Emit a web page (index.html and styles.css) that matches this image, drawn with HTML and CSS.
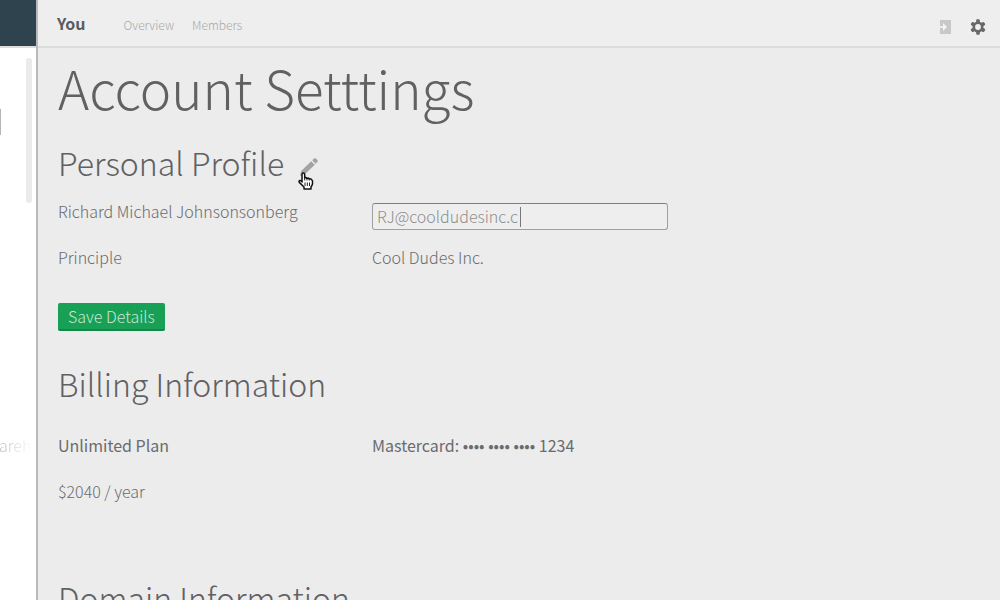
FILE: index.html
```html
<!DOCTYPE html>
<html lang="en">
<head>
<meta charset="utf-8">
<meta name="viewport" content="width=device-width, initial-scale=1">
<title>Account Settings</title>
<link rel="stylesheet" href="styles.css">
</head>
<body>
<div class="app">
  <aside class="sidebar">
    <div class="sidebar-head"></div>
    <div class="sidebar-body">
      <span class="marker"></span>
      <span class="scroll-thumb"></span>
      <span class="sidebar-label">areh</span>
    </div>
  </aside>
  <div class="panel">
    <header class="topbar">
      <strong class="brand">You</strong>
      <nav class="tabs">
        <a href="#overview">Overview</a>
        <a href="#members">Members</a>
      </nav>
      <div class="tools">
        <button class="tool" type="button" aria-label="Sign out">
          <svg width="11" height="14" viewBox="0 0 11 14"><path fill="#c8c8c8" d="M0 0h11v14H0z"/><path fill="#f6f6f6" d="M0 6.200h3V3l4 4-4 4V7.800H0z"/></svg>
        </button>
        <button class="tool" type="button" aria-label="Settings">
          <svg width="16" height="16" viewBox="0 0 16 16"><g fill="#66686a"><circle cx="8" cy="8" r="5.500"/><rect x="6.200" y="0.300" width="3.600" height="15.400" rx="1"/><rect x="6.200" y="0.300" width="3.600" height="15.400" rx="1" transform="rotate(60 8 8)"/><rect x="6.200" y="0.300" width="3.600" height="15.400" rx="1" transform="rotate(120 8 8)"/></g><circle cx="8" cy="8" r="2.900" fill="#efefef"/></svg>
        </button>
      </div>
    </header>
    <main class="content">
      <h1>Account Setttings</h1>

      <form class="section">
        <div class="section-head">
          <h2>Personal Profile</h2>
          <button class="edit" type="button" aria-label="Edit profile">
            <svg class="pencil" width="18" height="18" viewBox="0 0 18 18"><g fill="#a3a3a3"><path d="M11.2 3.2l3.6 3.6L4.6 16.4 0 18l1.2-5z"/><path d="M12.2 2.3l1.7-1.7q1-.9 2 0l1.4 1.4q.9 1 0 2l-1.700 1.700z"/></g></svg>
            <svg class="pointer" width="16" height="18" viewBox="0 0 16 18"><path d="M4 10V2.600Q4 1 5.300 1t1.400 1.600V6Q7.600 5 8.800 6.400 10.200 5.600 11.200 7 13 6.300 14 8.200L14.500 9v2.700Q14.300 13.500 13 14.800V17H6v-2L1.300 10.400Q.6 9 1.800 8.500T4 10z" fill="#fff" stroke="#111" stroke-width="1.500" stroke-linejoin="round"/><path d="M7 10.500v3.500M9.300 10.500v3.500M11.500 10.500v3.500M6.700 6v2.500M9 6.500v2M11.300 7v1.500" stroke="#222" fill="none"/></svg>
          </button>
        </div>
        <div class="details">
          <p>Richard Michael Johnsonsonberg</p>
          <div class="field">
            <input type="text" aria-label="Email" value="RJ@cooldudesinc.c">
            <span class="caret"></span>
          </div>
          <p>Principle</p>
          <p>Cool Dudes Inc.</p>
        </div>
        <button class="save" type="button">Save Details</button>
      </form>

      <section class="section billing">
        <h2>Billing Information</h2>
        <div class="details">
          <p class="strong">Unlimited Plan</p>
          <p class="strong">Mastercard: •••• •••• •••• 1234</p>
          <p>$2040 / year</p>
        </div>
      </section>

      <section class="section domain">
        <h2>Domain Information</h2>
      </section>
    </main>
  </div>
</div>
</body>
</html>
```
FILE: styles.css
```css
* { box-sizing: border-box; }
body {
  margin: 0;
  font-family: "Noto Sans CJK JP", "Noto Sans CJK SC", sans-serif;
  font-size: 16px;
  line-height: 24px;
  font-weight: 300;
  color: #6a6b6d;
  background: #ececec;
}
h1, h2, p { margin: 0; }
button {
  padding: 0;
  border: 0;
  background: none;
  font: inherit;
}
svg { display: block; }

.app {
  display: grid;
  grid-template-columns: 38px 1fr;
  height: 100vh;
}
.sidebar {
  display: flex;
  flex-direction: column;
  background: #fff;
  border-right: 2px solid #b9b9ba;
  overflow: hidden;
}
.sidebar-head {
  flex: none;
  height: 46px;
  background: #2e434e;
}
.sidebar-body {
  position: relative;
  flex: 1;
  border-top: 2px solid #dcdcdc;
}
.scroll-thumb {
  position: absolute;
  top: 10px;
  right: 4px;
  width: 6px;
  height: 145px;
  border-radius: 3px;
  background: #ebebeb;
}
.marker {
  position: absolute;
  top: 61px;
  left: 0;
  width: 1px;
  height: 26px;
  background: #b5b5b5;
}
.sidebar-label {
  position: absolute;
  top: 385px;
  left: -1px;
  color: transparent;
  background: linear-gradient(90deg, #bbb, #fafafa 32px);
  background-clip: text;
}

.panel {
  display: flex;
  flex-direction: column;
  min-width: 0;
  min-height: 0;
}
.topbar {
  flex: none;
  display: flex;
  align-items: center;
  height: 48px;
  padding: 0 14px 0 19px;
  background: #eee;
  border-bottom: 2px solid #dcdcdc;
}
.brand {
  font-size: 16px;
  font-weight: 700;
  color: #5a5c5e;
}
.tabs {
  display: flex;
  gap: 18px;
  margin-left: 38px;
  padding-top: 4px;
  font-size: 12px;
}
.tabs a {
  color: #a8a8a8;
  text-decoration: none;
}
.tools {
  display: flex;
  align-items: center;
  gap: 19px;
  margin-left: auto;
  padding-top: 8px;
}

.content {
  flex: 1;
  min-height: 0;
  padding: 7px 20px 20px;
  overflow-y: auto;
  scrollbar-width: none;
}
h1 {
  font-size: 53px;
  line-height: 64px;
  font-weight: 200;
  color: #5f6163;
}
h2 {
  font-size: 32px;
  line-height: 48px;
  font-weight: 200;
  color: #5f6163;
}
.section { margin-top: 19px; }
.section-head {
  display: flex;
  align-items: center;
  gap: 16px;
}
.edit {
  position: relative;
  padding-top: 10px;
}
.pointer {
  position: absolute;
  top: 24px;
  left: -2px;
}
.details {
  display: grid;
  grid-template-columns: 314px 1fr;
  grid-auto-rows: 46px;
  align-items: start;
  margin-top: 13px;
}
.strong { font-weight: 400; }
.field {
  position: relative;
  width: 296px;
  max-width: 100%;
  margin-top: 4px;
}
.field input {
  display: block;
  width: 100%;
  height: 27px;
  padding: 0 4px 2px;
  border: 1px solid #a0a0a0;
  border-top-color: #808080;
  border-radius: 3px;
  background: #eee;
  font: inherit;
  color: #8f8f8f;
  outline: none;
}
.caret {
  position: absolute;
  top: 4px;
  left: 148px;
  width: 1px;
  height: 20px;
  background: #777;
}
.save {
  display: block;
  height: 28px;
  margin-top: 12px;
  padding: 0 10px;
  border-bottom: 2px solid #128748;
  border-radius: 2px;
  background: #18a057;
  color: #c9e8d6;
}
.billing { margin-top: 28px; }
.billing .details { margin-top: 26px; }
.domain { margin-top: 48px; }
```
